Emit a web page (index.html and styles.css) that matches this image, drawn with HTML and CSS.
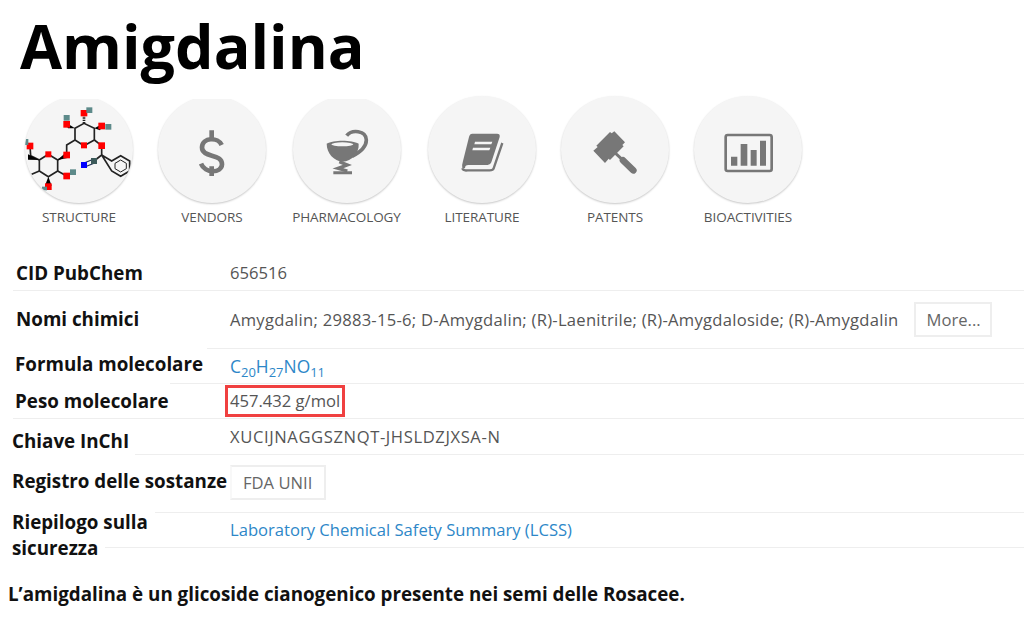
FILE: index.html
```html
<!DOCTYPE html>
<html lang="it">
<head>
  <meta charset="UTF-8">
  <title>Amigdalina</title>
  <link rel="stylesheet" href="styles.css">
</head>
<body>
  <h1 class="title">Amigdalina</h1>

  <div class="tabs">
    <div class="tab">
      <div class="circle">
        <svg class="mol" viewBox="75 33 324 324">
          <g fill="none" stroke="#222" stroke-width="5">
            <path d="M225 130L252 115L283 130L283 165L252 182L225 165Z"/>
            <path d="M118 225L145 208L173 225L173 258L145 275L118 258Z"/>
            <path d="M225 165L200 180L200 210L173 225"/>
            <path d="M90 183L92 212L118 225M118 258L95 268"/>
            <path d="M173 258L200 273M283 165L305 182L305 210L282 228"/>
            <path d="M305 210L335 228L362 212L389 228L389 258L362 274L335 258Z"/>
            <path d="M345 235L362 225L379 235L379 251L362 261L345 251Z" stroke-width="3"/>
            <path d="M282 222L252 234M284 234L254 246" stroke="#235" stroke-width="4"/>
            <path d="M252 115L252 90" stroke-dasharray="4 3" stroke-width="8"/>
          </g>
          <g fill="#000">
            <path d="M225 130L194 110L204 130Z"/>
            <path d="M283 130L312 114L300 136Z"/>
            <path d="M118 225L84 208L84 224Z"/>
            <path d="M173 225L198 202L206 218Z"/>
            <path d="M145 275L135 302L155 302Z"/>
          </g>
          <g fill="#f00">
            <rect x="242" y="75" width="20" height="19"/>
            <rect x="190" y="108" width="20" height="20"/>
            <rect x="295" y="113" width="20" height="20"/>
            <rect x="243" y="172" width="18" height="18"/>
            <rect x="295" y="172" width="20" height="20"/>
            <rect x="190" y="200" width="20" height="20"/>
            <rect x="136" y="199" width="18" height="18"/>
            <rect x="80" y="173" width="20" height="20"/>
            <rect x="190" y="263" width="20" height="20"/>
            <rect x="135" y="295" width="20" height="20"/>
          </g>
          <g fill="#5d8a8a">
            <rect x="259" y="67" width="18" height="17"/>
            <rect x="191" y="90" width="18" height="17"/>
            <rect x="316" y="117" width="18" height="17"/>
            <rect x="210" y="253" width="18" height="17"/>
            <rect x="75" y="162" width="10" height="18"/>
            <rect x="126" y="305" width="15" height="11"/>
          </g>
          <rect x="243" y="231" width="18" height="18" fill="#00f"/>
          <rect x="273" y="219" width="18" height="18" fill="#3c5a5a"/>
        </svg>
      </div>
      <span class="tab-name">STRUCTURE</span>
    </div>
    <div class="tab">
      <div class="circle">
        <svg class="ico" viewBox="475 33 324 324">
          <path d="M666 180C656 156 608 156 607 187C607 220 667 204 667 238C665 266 616 266 604 236" fill="none" stroke="#777" stroke-width="14"/>
          <path d="M636 136V166M636 244V273" stroke="#777" stroke-width="14"/>
        </svg>
      </div>
      <span class="tab-name">VENDORS</span>
    </div>
    <div class="tab">
      <div class="circle">
        <svg class="ico" viewBox="69 33 324 324">
          <path d="M170 176C190 164 245 164 266 176C268 205 245 228 218 230C192 228 170 205 170 176Z" fill="#777"/>
          <ellipse cx="217" cy="178" rx="33" ry="6" fill="#f5f5f5"/>
          <path d="M230 152C245 133 288 135 289 165C289 188 264 205 246 214" fill="none" stroke="#777" stroke-width="11"/>
          <path d="M208 230L232 240L204 250L232 258" fill="none" stroke="#777" stroke-width="10"/>
          <path d="M190 259H246V268H190Z" fill="#777"/>
        </svg>
      </div>
      <span class="tab-name">PHARMACOLOGY</span>
    </div>
    <div class="tab">
      <div class="circle">
        <svg class="ico" viewBox="475 33 324 324">
          <path d="M608 146H682Q692 146 690 156L665 232Q662 240 654 240H596Q586 240 586 250H578Q576 240 580 228L598 156Q600 146 608 146Z" fill="#777"/>
          <path d="M616 170H668L665 178H614ZM610 188H662L659 196H608Z" fill="#f5f5f5"/>
          <path d="M698 174L672 250Q670 256 660 256H594Q580 258 578 250" fill="none" stroke="#777" stroke-width="7"/>
        </svg>
      </div>
      <span class="tab-name">LITERATURE</span>
    </div>
    <div class="tab">
      <div class="circle">
        <svg class="ico" viewBox="66 33 324 324">
          <path d="M163 197L176 186L172 182L213 141L218 145L226 139L258 172L250 180L254 184L213 225L209 221L198 234Z" fill="#777"/>
          <path d="M222 198L250 224" stroke="#777" stroke-width="9"/>
          <path d="M252 226L283 256" stroke="#777" stroke-width="20" stroke-linecap="round"/>
        </svg>
      </div>
      <span class="tab-name">PATENTS</span>
    </div>
    <div class="tab">
      <div class="circle">
        <svg class="ico" viewBox="462 33 324 324">
          <rect x="557" y="150" width="138" height="108" rx="6" fill="none" stroke="#777" stroke-width="8"/>
          <path d="M573 215H592V242H573ZM602 177H622V242H602ZM632 195H650V242H632ZM660 167H678V242H660Z" fill="#777"/>
        </svg>
      </div>
      <span class="tab-name">BIOACTIVITIES</span>
    </div>
  </div>

  <div class="info">
    <div class="row row-s">
      <div class="label lab-16">CID PubChem</div>
      <div class="value">656516</div>
    </div>
    <hr class="rule from-13">
    <div class="row row-l">
      <div class="label lab-16 up-small">Nomi chimici</div>
      <div class="value names">
        <span>Amygdalin; 29883-15-6; D-Amygdalin; (R)-Laenitrile; (R)-Amygdaloside; (R)-Amygdalin</span>
        <span class="btn btn-more">More...</span>
      </div>
    </div>
    <hr class="rule from-207">
    <div class="row row-s">
      <div class="label lab-15 up">Formula molecolare</div>
      <div class="value link formula">C<sub>20</sub>H<sub>27</sub>NO<sub>11</sub></div>
    </div>
    <hr class="rule from-170">
    <div class="row row-s">
      <div class="label lab-15">Peso molecolare</div>
      <div class="value"><span class="marked">457.432 g/mol</span></div>
    </div>
    <hr class="rule from-13">
    <div class="row row-m">
      <div class="label lab-12 down">Chiave InChI</div>
      <div class="value key">XUCIJNAGGSZNQT-JHSLDZJXSA-N</div>
    </div>
    <hr class="rule from-135">
    <div class="row row-l">
      <div class="label lab-12 up">Registro delle sostanze</div>
      <div class="value"><span class="btn btn-fda">FDA UNII</span></div>
    </div>
    <hr class="rule from-155">
    <div class="row row-s">
      <div class="label lab-12 two">Riepilogo sulla sicurezza</div>
      <div class="value link">Laboratory Chemical Safety Summary (LCSS)</div>
    </div>
    <hr class="rule from-105">
  </div>

  <p class="note">L’amigdalina è un glicoside cianogenico presente nei semi delle Rosacee.</p>
</body>
</html>
```

FILE: styles.css
```css
html, body {
  margin: 0;
  padding: 0;
  background: #fff;
  overflow: hidden;
}
body {
  font-family: "Open Sans", "Noto Sans", sans-serif;
  color: #000;
}

/* title covers the top of the first three circles */
.title {
  position: relative;
  z-index: 1;
  box-sizing: border-box;
  width: 415px;
  height: 99px;
  margin: 0 0 -3px;
  padding-left: 20px;
  background: #fff;
  font-size: 61px;
  line-height: 92px;
  font-weight: 700;
}

.tabs {
  display: grid;
  grid-template-columns: 134px 132px 137px 134px 132px 134px;
  padding-left: 12px;
  height: 160px;
}
.tab {
  display: flex;
  flex-direction: column;
  align-items: center;
}
.circle {
  width: 108px;
  height: 107px;
  border-radius: 50%;
  background: #f5f5f5;
  box-shadow: 0 1px 2px rgba(0,0,0,0.22);
  overflow: hidden;
}
.circle svg {
  display: block;
  width: 108px;
  height: 108px;
}
.mol {
  filter: blur(0.4px);
}
.tab-name {
  margin-top: 5px;
  font-size: 13.5px;
  line-height: 18px;
  color: #555;
  letter-spacing: -0.07px;
  white-space: nowrap;
}

.row {
  display: grid;
  grid-template-columns: 230px 1fr;
  align-items: center;
}
.row-s { height: 34px; }
.row-m { height: 35px; }
.row-l { height: 57px; }

.label {
  font-size: 18.8px;
  font-weight: 700;
  line-height: 26px;
  color: #111;
  white-space: nowrap;
}
.lab-16 { padding-left: 16px; }
.lab-15 { padding-left: 15px; }
.lab-12 { padding-left: 12px; }
.up { padding-bottom: 5px; }
.up-small { padding-bottom: 2px; }
.down { padding-top: 9px; }
.two {
  width: 170px;
  white-space: normal;
  align-self: start;
  margin-top: -4px;
  margin-bottom: -30px;
}

.value {
  font-size: 16.6px;
  color: #555;
  line-height: 22px;
}
.link { color: #2d87c8; }
.value sub {
  font-size: 13px;
  line-height: 0;
}
.formula {
  font-size: 17.4px;
}
.key {
  letter-spacing: 0.6px;
}
.names {
  display: flex;
  align-items: center;
  gap: 15px;
  white-space: nowrap;
  letter-spacing: 0.26px;
}
.btn {
  display: inline-block;
  box-sizing: border-box;
  height: 35px;
  line-height: 31px;
  border: 2px solid #eee;
  color: #666;
}
.btn-more {
  width: 78px;
  padding-left: 11px;
  letter-spacing: 0;
}
.btn-fda {
  width: 96px;
  padding-left: 11px;
  margin-top: -3px;
  vertical-align: top;
  border-left-color: #f8f8f8;
}
.marked {
  display: inline-block;
  margin-left: -5px;
  padding: 2px 2px 2px 2px;
  border: 3px solid #f04040;
  line-height: 22px;
}

.rule {
  height: 1px;
  margin: 0;
  border: 0;
  background: #eee;
}
.from-13 { margin-left: 13px; }
.from-105 { margin-left: 105px; }
.from-135 { margin-left: 135px; }
.from-155 { margin-left: 155px; }
.from-170 { margin-left: 170px; }
.from-207 { margin-left: 207px; }

.note {
  margin: 33px 0 0;
  padding-left: 8px;
  font-size: 18.8px;
  line-height: 26px;
  font-weight: 700;
  color: #111;
}
```
